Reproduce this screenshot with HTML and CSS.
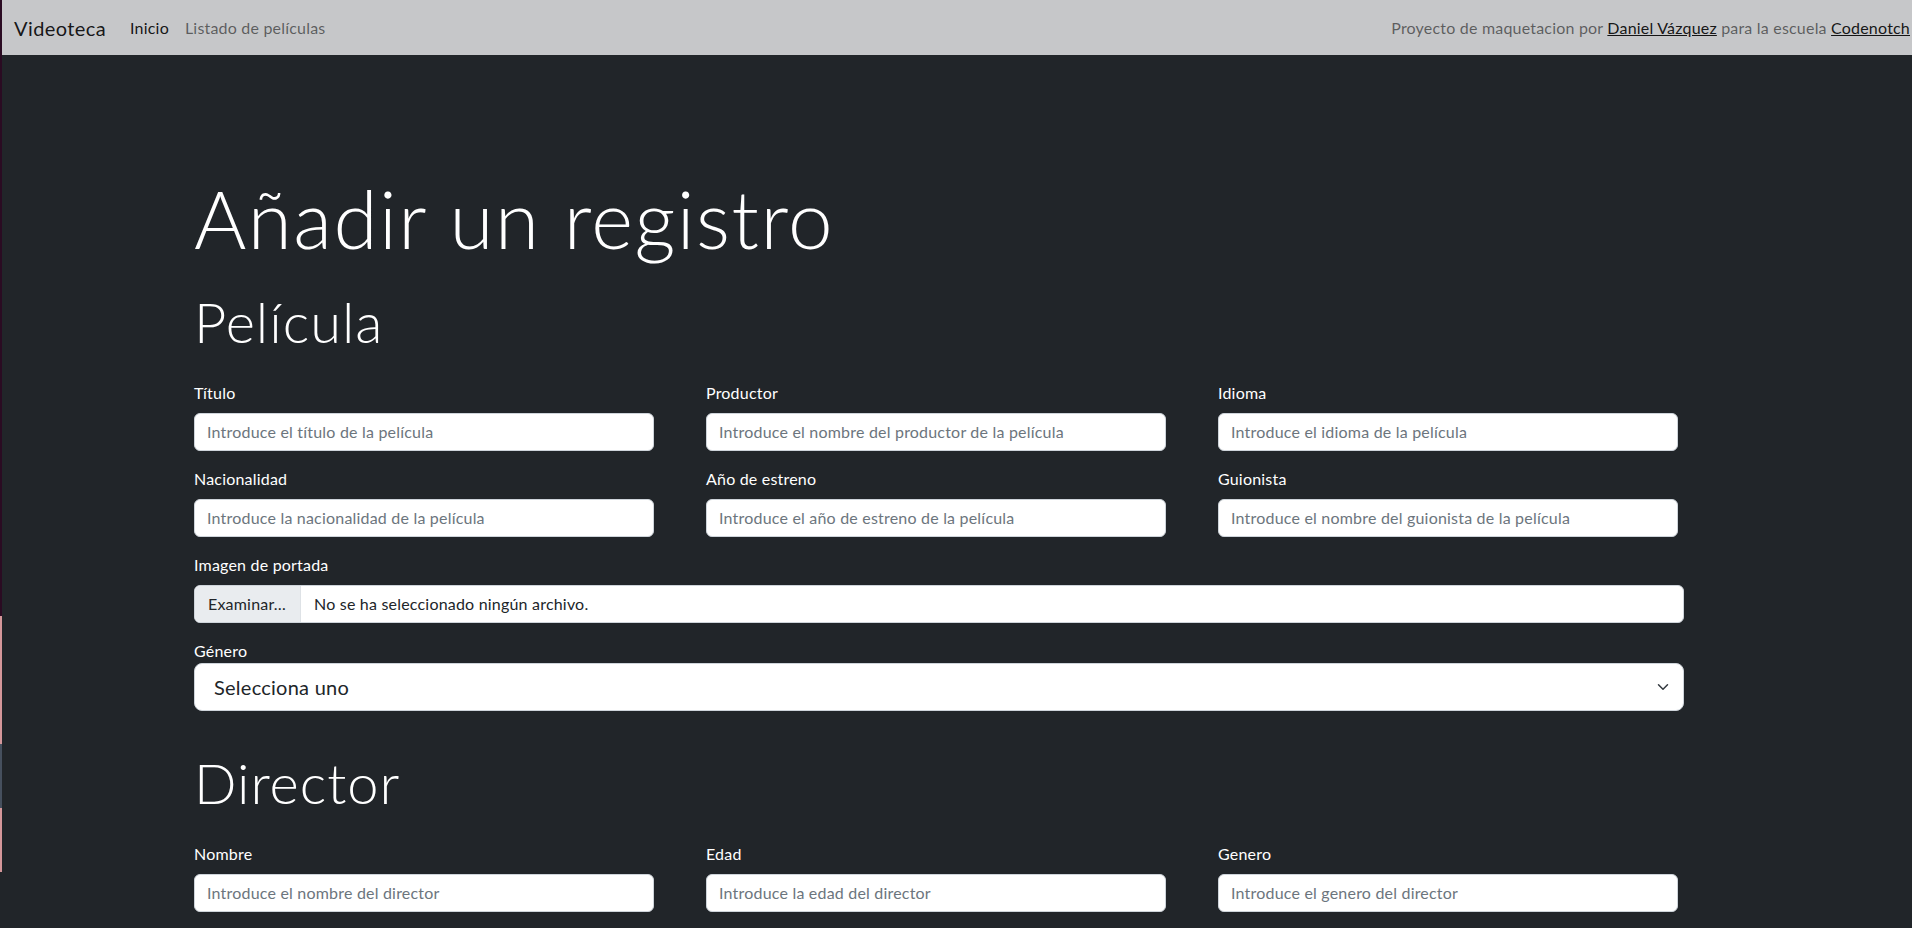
FILE: index.html
```html
<!DOCTYPE html>
<html lang="es">
<head>
<meta charset="utf-8">
<title>Videoteca</title>
<link rel="stylesheet" href="styles.css">
</head>
<body>
<nav class="navbar">
  <a class="brand" href="#">Videoteca</a>
  <ul class="nav-links">
    <li><a class="nav-link active" href="#">Inicio</a></li>
    <li><a class="nav-link" href="#">Listado de películas</a></li>
  </ul>
  <p class="navbar-text">Proyecto de maquetacion por <a href="#">Daniel Vázquez</a> para la escuela <a href="#">Codenotch</a></p>
</nav>
<main class="container">
  <h1 class="display-1">Añadir un registro</h1>
  <h2 class="display-4">Película</h2>
  <div class="grid3">
    <div class="field">
      <label class="form-label">Título</label>
      <input class="form-control" type="text" placeholder="Introduce el título de la película">
    </div>
    <div class="field">
      <label class="form-label">Productor</label>
      <input class="form-control" type="text" placeholder="Introduce el nombre del productor de la película">
    </div>
    <div class="field">
      <label class="form-label">Idioma</label>
      <input class="form-control" type="text" placeholder="Introduce el idioma de la película">
    </div>
    <div class="field">
      <label class="form-label">Nacionalidad</label>
      <input class="form-control" type="text" placeholder="Introduce la nacionalidad de la película">
    </div>
    <div class="field">
      <label class="form-label">Año de estreno</label>
      <input class="form-control" type="text" placeholder="Introduce el año de estreno de la película">
    </div>
    <div class="field">
      <label class="form-label">Guionista</label>
      <input class="form-control" type="text" placeholder="Introduce el nombre del guionista de la película">
    </div>
  </div>
  <div class="field">
    <label class="form-label">Imagen de portada</label>
    <div class="file-control">
      <span class="file-button">Examinar…</span>
      <span class="file-name">No se ha seleccionado ningún archivo.</span>
    </div>
  </div>
  <div class="field field-select">
    <label class="form-label tight">Género</label>
    <div class="select-lg">
      <span>Selecciona uno</span>
      <svg class="chevron" width="16" height="12" viewBox="0 0 16 16" aria-hidden="true"><path fill="none" stroke="#343a40" stroke-linecap="round" stroke-linejoin="round" stroke-width="2" d="m2 5 6 6 6-6"/></svg>
    </div>
  </div>
  <h2 class="display-4 section">Director</h2>
  <div class="grid3">
    <div class="field">
      <label class="form-label">Nombre</label>
      <input class="form-control" type="text" placeholder="Introduce el nombre del director">
    </div>
    <div class="field">
      <label class="form-label">Edad</label>
      <input class="form-control" type="text" placeholder="Introduce la edad del director">
    </div>
    <div class="field">
      <label class="form-label">Genero</label>
      <input class="form-control" type="text" placeholder="Introduce el genero del director">
    </div>
  </div>
</main>
</body>
</html>
```
FILE: styles.css
```css
* { box-sizing: border-box; }

html {
  height: 100%;
  background: linear-gradient(to bottom,
    #2a0b22 0, #2a0b22 616px,
    #d4979a 616px, #d4979a 744px,
    #46505e 744px, #46505e 808px,
    #d4979a 808px, #d4979a 872px,
    #212529 872px);
  background-repeat: no-repeat;
  overflow: hidden;
}

body {
  margin: 0 0 0 2px;
  min-height: 100vh;
  background: #212529;
  color: #fff;
  font-family: Lato, "Noto Sans", sans-serif;
  font-size: 16px;
  line-height: 1.5;
  letter-spacing: 0.2px;
}

a { color: inherit; }

.navbar {
  height: 55px;
  background: #c6c7c9;
  display: flex;
  align-items: center;
  padding: 0 2px 0 12px;
}

.brand {
  font-size: 20px;
  letter-spacing: 0.4px;
  color: rgba(0, 0, 0, .9);
  text-decoration: none;
  margin-right: 16px;
}

.nav-links {
  list-style: none;
  margin: 0;
  padding: 0;
  display: flex;
}

.nav-link {
  display: block;
  padding: 8px;
  color: rgba(0, 0, 0, .55);
  text-decoration: none;
}

.nav-link.active { color: rgba(0, 0, 0, .9); }

.navbar-text {
  margin: 0 0 0 auto;
  color: rgba(0, 0, 0, .55);
}

.navbar-text a {
  color: rgba(0, 0, 0, .9);
  text-decoration: underline;
}

.container {
  width: 1490px;
  margin-left: 192px;
  padding-top: 115px;
}

.display-1 {
  font-size: 80px;
  font-weight: 300;
  line-height: 1.2;
  letter-spacing: 1.5px;
  margin: 0 0 22px;
}

.display-4 {
  font-size: 56px;
  font-weight: 300;
  line-height: 1.2;
  letter-spacing: 1px;
  margin: 0 0 26px;
}

.display-4.section { margin-top: 38px; }

.grid3 {
  display: grid;
  grid-template-columns: repeat(3, 460px);
  column-gap: 52px;
}

.field { margin-bottom: 16px; }
.field-select { margin-bottom: 0; }

.form-label {
  display: block;
  margin-bottom: 8px;
  line-height: 24px;
}

.form-label.tight { margin-bottom: 0; }

.form-control {
  display: block;
  width: 100%;
  height: 38px;
  padding: 5px 12px 7px;
  font: inherit;
  font-size: 16px;
  line-height: 24px;
  letter-spacing: 0.2px;
  color: #212529;
  background: #fff;
  border: 1px solid #ced4da;
  border-radius: 6px;
  outline: none;
}

.form-control::placeholder { color: #6c757d; opacity: 1; }

.file-control {
  display: flex;
  align-items: center;
  height: 38px;
  background: #fff;
  border: 1px solid #ced4da;
  border-radius: 6px;
  overflow: hidden;
  color: #212529;
}

.file-button {
  height: 100%;
  display: flex;
  align-items: center;
  padding: 0 14px 1px 13px;
  background: #e9ecef;
  border-right: 1px solid #dee2e6;
}

.file-name { padding: 0 0 1px 13px; }

.select-lg {
  display: flex;
  align-items: center;
  justify-content: space-between;
  height: 48px;
  padding: 0 12px 1px 19px;
  background: #fff;
  border: 1px solid #ced4da;
  border-radius: 8px;
  color: #212529;
  font-size: 20px;
  letter-spacing: 0.25px;
}

.chevron { display: block; margin-top: 1px; }
```
